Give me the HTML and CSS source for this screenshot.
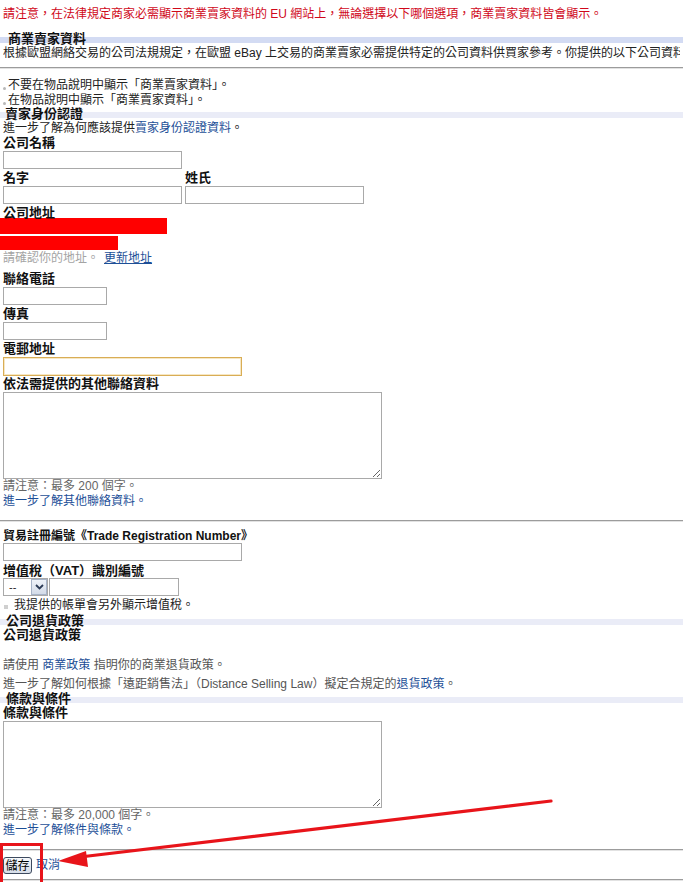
FILE: index.html
```html
<!DOCTYPE html>
<html lang="zh-Hant">
<head>
<meta charset="utf-8">
<title>商業賣家資料</title>
<link rel="stylesheet" href="styles.css">
</head>
<body>
<div class="page">
  <p class="notice">請注意，在法律規定商家必需顯示商業賣家資料的 EU 網站上，無論選擇以下哪個選項，商業賣家資料皆會顯示。</p>

  <h2 class="sec-head sec-head--first">商業賣家資料</h2>
  <p class="intro">根據歐盟網絡交易的公司法規規定，在歐盟 eBay 上交易的商業賣家必需提供特定的公司資料供買家參考。你提供的以下公司資料將會顯示於物品說明中。</p>
  <hr class="rule rule--first">
  <div class="choices">
    <label class="choice"><span class="dot"></span>不要在物品說明中顯示「商業賣家資料」。</label>
    <label class="choice"><span class="dot"></span>在物品說明中顯示「商業賣家資料」。</label>
  </div>

  <h2 class="sec-head sec-head--id">賣家身份認證</h2>
  <p class="help">進一步了解為何應該提供<a href="#" class="link">賣家身份認證資料</a>。</p>
  <div class="field-label">公司名稱</div>
  <input class="input input--company" type="text">
  <div class="name-row">
    <div class="name-col">
      <div class="field-label">名字</div>
      <input class="input input--name" type="text">
    </div>
    <div class="name-col">
      <div class="field-label">姓氏</div>
      <input class="input input--name" type="text">
    </div>
  </div>
  <div class="field-label field-label--addr">公司地址</div>
  <div class="redact redact--one"></div>
  <div class="redact redact--two"></div>
  <p class="addr-note">請確認你的地址。<a href="#" class="link link--under">更新地址</a></p>

  <div class="field-label field-label--phone">聯絡電話</div>
  <input class="input input--short" type="text">
  <div class="field-label field-label--gap">傳真</div>
  <input class="input input--short" type="text">
  <div class="field-label field-label--gap">電郵地址</div>
  <input class="input input--email input--focus" type="text">
  <div class="field-label field-label--tight">依法需提供的其他聯絡資料</div>
  <textarea class="area"></textarea>
  <p class="note">請注意：最多 200 個字。</p>
  <p class="note"><a href="#" class="link">進一步了解其他聯絡資料。</a></p>

  <hr class="rule rule--mid">
  <div class="field-label field-label--trade">貿易註冊編號《Trade Registration Number》</div>
  <input class="input input--trade" type="text">
  <div class="field-label field-label--vat">增值稅（VAT）識別編號</div>
  <div class="vat-row">
    <div class="select">
      <span class="select-text">--</span>
      <span class="select-btn">
        <svg width="9" height="6" viewBox="0 0 9 6"><path d="M1 1 L4.5 4.5 L8 1" fill="none" stroke="#2b3a55" stroke-width="1.8"/></svg>
      </span>
    </div>
    <input class="input input--vat" type="text">
  </div>
  <label class="check-line"><span class="box"></span>我提供的帳單會另外顯示增值稅。</label>

  <h2 class="sec-head sec-head--return">公司退貨政策</h2>
  <div class="field-label">公司退貨政策</div>
  <p class="grey-line grey-line--first">請使用 <a href="#" class="link">商業政策</a> 指明你的商業退貨政策。</p>
  <p class="grey-line grey-line--second">進一步了解如何根據「遠距銷售法」（Distance Selling Law）擬定合規定的<a href="#" class="link">退貨政策</a>。</p>

  <h2 class="sec-head sec-head--terms">條款與條件</h2>
  <div class="field-label">條款與條件</div>
  <textarea class="area area--terms"></textarea>
  <p class="note">請注意：最多 20,000 個字。</p>
  <p class="note"><a href="#" class="link">進一步了解條件與條款。</a></p>

  <hr class="rule rule--save">
  <div class="actions">
    <button class="btn" type="button">儲存</button>
    <a href="#" class="link">取消</a>
  </div>
  <hr class="rule rule--end">
</div>

<div class="mark-box"></div>
<svg class="mark-arrow" width="683" height="882" viewBox="0 0 683 882">
  <line x1="551" y1="801" x2="80" y2="857" stroke="#e8141a" stroke-width="3.2" stroke-linecap="round"/>
  <polygon points="58,861 86,851 88,867" fill="#e8141a"/>
</svg>
</body>
</html>
```

FILE: styles.css
```css
html, body {
  margin: 0;
  padding: 0;
  background: #fff;
}

body {
  position: relative;
  width: 683px;
  height: 882px;
  overflow: hidden;
  font-family: "Liberation Sans", "Noto Sans CJK TC", sans-serif;
  font-size: 12px;
  line-height: 15px;
  color: #222;
}

.page {
  padding: 0 3px;
  white-space: nowrap;
}

p {
  margin: 0;
}

.link {
  color: #1d4f97;
  text-decoration: none;
}

.link--under {
  text-decoration: underline;
  margin-left: 5px;
}

.notice {
  padding-top: 7px;
  color: #d0081a;
}

.sec-head {
  margin: 2px -3px 0;
  padding-left: 6px;
  height: 14px;
  font-size: 13px;
  line-height: 14px;
  font-weight: bold;
  color: #111;
  background: linear-gradient(to bottom, transparent 5px, #eaecf7 5px, #eaecf7 11px, transparent 11px);
}

.sec-head--first {
  margin-top: 10px;
  padding-left: 8px;
  background: linear-gradient(to bottom, transparent 5px, #d3dbf3 5px, #d3dbf3 11px, transparent 11px);
}

.sec-head--id {
  margin-top: -1px;
  padding-left: 5px;
}

.sec-head--terms {
  margin-top: 0;
}

.intro {
  overflow: hidden;
}

.rule {
  margin: 0 -3px;
  height: 0;
  border: 0;
  border-top: 1px solid #9c9c9c;
  border-bottom: 1px solid #e2e2e2;
}

.rule--first { margin-top: 6px; }
.rule--mid { margin-top: 11px; }
.rule--save { margin-top: 11px; }
.rule--end { margin-top: 5px; }

.choices {
  margin-top: 9px;
  display: flex;
  flex-direction: column;
}

.choice {
  display: flex;
  align-items: center;
  height: 15px;
}

.dot {
  width: 3px;
  height: 3px;
  border-radius: 50%;
  background: #b8b8b8;
  margin: 5px 2px 0 0;
}

.help {
  line-height: 15px;
}

.field-label {
  font-size: 13px;
  font-weight: bold;
  line-height: 14px;
  height: 14px;
  color: #111;
}

.field-label--addr { margin-top: 2px; }
.field-label--phone { margin-top: 7px; }
.field-label--gap { margin-top: 2px; }
.field-label--tight { margin-top: 1px; }
.field-label--trade { margin-top: 7px; font-size: 12px; }
.field-label--vat { margin-top: 3px; }

.input {
  display: block;
  box-sizing: border-box;
  margin: 1px 0 0;
  height: 18px;
  border: 1px solid #a9a9a9;
  padding: 0 2px;
  font: inherit;
  background: #fff;
}

.input--company { width: 179px; }
.input--name { width: 179px; }
.input--short { width: 104px; }

.input--email {
  width: 239px;
  height: 19px;
}

.input--focus {
  border-color: #d9ad55;
  box-shadow: inset 0 0 0 1px #f6e7c4;
}

.input--trade {
  width: 239px;
  margin-top: 0;
}

.input--vat {
  width: 130px;
  margin: 0;
}

.name-row {
  margin-top: 2px;
  display: grid;
  grid-template-columns: 179px 179px;
  column-gap: 3px;
}

.redact {
  margin-left: -3px;
  background: #ff0000;
}

.redact--one {
  margin-top: -2px;
  width: 167px;
  height: 16px;
}

.redact--two {
  margin-top: 2px;
  width: 118px;
  height: 14px;
}

.addr-note {
  margin-top: 1px;
  line-height: 14px;
  color: #a4a4a4;
}

.area {
  display: block;
  box-sizing: border-box;
  margin: 1px 0 0;
  width: 379px;
  height: 87px;
  border: 1px solid #a9a9a9;
  resize: both;
  font: inherit;
}

.area--terms {
  margin-top: 1px;
}

.note {
  color: #666;
  line-height: 15px;
}

.vat-row {
  display: flex;
  gap: 1px;
  height: 18px;
}

.select {
  box-sizing: border-box;
  width: 45px;
  height: 18px;
  border: 1px solid #a9a9a9;
  display: flex;
  align-items: center;
  justify-content: space-between;
  padding-left: 5px;
  background: #fff;
}

.select-text {
  font-size: 11px;
  line-height: 14px;
  color: #222;
}

.select-btn {
  box-sizing: border-box;
  width: 16px;
  height: 16px;
  border: 1px solid #a6b3c8;
  background: linear-gradient(#eef2f8, #d3dbe8);
  display: flex;
  align-items: center;
  justify-content: center;
}

.check-line {
  display: flex;
  align-items: center;
  margin-top: 2px;
  height: 14px;
  line-height: 14px;
}

.box {
  width: 4px;
  height: 4px;
  background: #cfcfcf;
  margin: 4px 6px 0 1px;
}

.sec-head--return {
  margin-top: 2px;
}

.grey-line {
  color: #555;
  line-height: 15px;
}

.grey-line--first { margin-top: 16px; }
.grey-line--second { margin-top: 4px; }

.actions {
  margin-top: 6px;
  display: flex;
  align-items: center;
  gap: 4px;
  height: 17px;
}

.btn {
  box-sizing: border-box;
  height: 17px;
  width: 29px;
  padding: 0;
  border: 1px solid #3d4a5e;
  border-radius: 3px;
  background: linear-gradient(#f7f9fc, #d6dde8);
  font-family: "Liberation Sans", "Noto Sans CJK TC", sans-serif;
  font-size: 12px;
  line-height: 14px;
  color: #000;
}

.mark-box {
  position: absolute;
  left: 0;
  top: 843px;
  width: 37px;
  height: 40px;
  border: 3px solid #e8141a;
  border-bottom: 0;
}

.mark-arrow {
  position: absolute;
  left: 0;
  top: 0;
  pointer-events: none;
}
```
